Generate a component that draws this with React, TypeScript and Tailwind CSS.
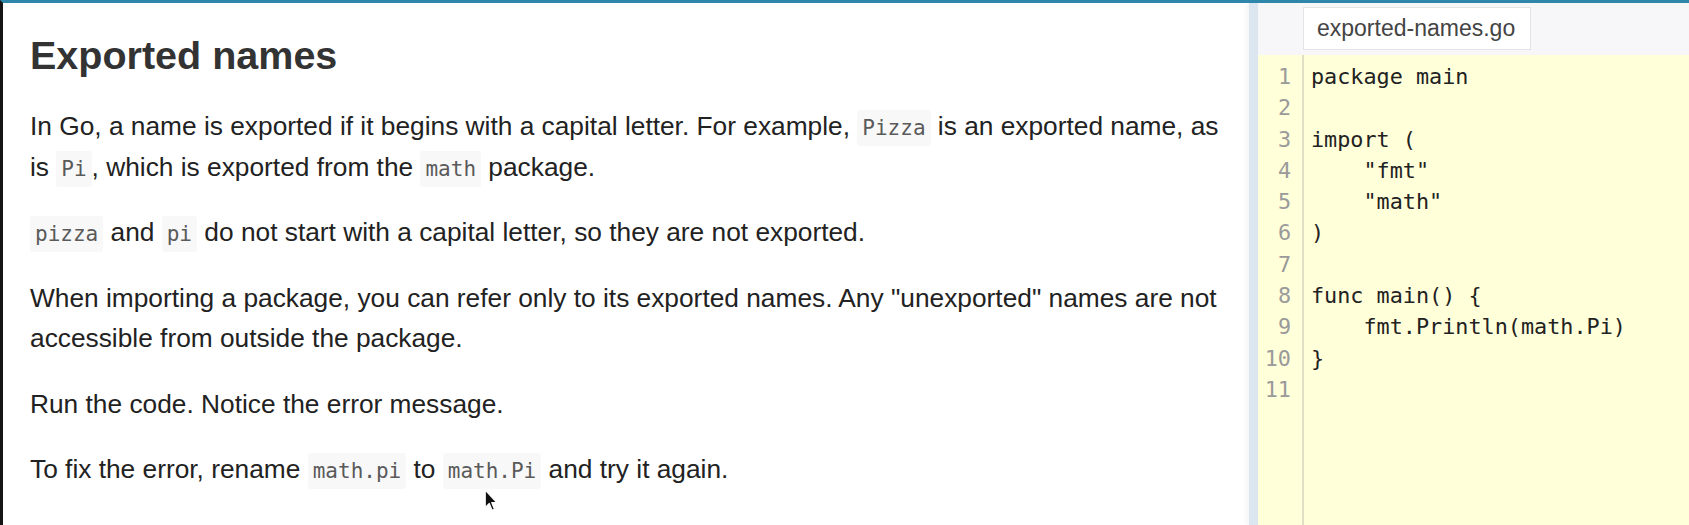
import React from 'react';

const codeLines = [
  'package main',
  '',
  'import (',
  '    "fmt"',
  '    "math"',
  ')',
  '',
  'func main() {',
  '    fmt.Println(math.Pi)',
  '}',
  '',
];

const Code = ({ children }: { children: React.ReactNode }) => (
  <code className="rounded-[3px] bg-[#f8f8f8] px-[5px] py-[6px] font-['DejaVu_Sans_Mono',monospace] text-[21px] leading-none text-[#5a5a5a]">
    {children}
  </code>
);

const App: React.FC = () => {
  return (
    <div className="relative flex h-[525px] w-[1689px] overflow-hidden border-t-[3px] border-l-[3px] border-t-[#2f86ab] border-l-[#151515] bg-white font-['Liberation_Sans',Arial,sans-serif]">
      {/* lesson text */}
      <div className="flex-1 pl-[27px] pr-[26px] pt-[29px] text-[#222]">
        <h1 className="text-[39.5px] font-bold leading-[46px] text-[#333]">Exported names</h1>
        <div className="mt-[28px] flex flex-col gap-[25px] text-[26.3px] leading-[40.5px]">
          <p>
            In Go, a name is exported if it begins with a capital letter. For example, <Code>Pizza</Code> is an exported name, as
            is <Code>Pi</Code>, which is exported from the <Code>math</Code> package.
          </p>
          <p>
            <Code>pizza</Code> and <Code>pi</Code> do not start with a capital letter, so they are not exported.
          </p>
          <p>
            When importing a package, you can refer only to its exported names. Any "unexported" names are not accessible from
            outside the package.
          </p>
          <p>Run the code. Notice the error message.</p>
          <p>
            To fix the error, rename <Code>math.pi</Code> to <Code>math.Pi</Code> and try it again.
          </p>
        </div>
      </div>

      {/* editor */}
      <div className="flex w-[440px] shrink-0">
        <div className="w-[9px] shrink-0 bg-[#dce6f1] shadow-[-3px_0_4px_rgba(0,0,0,0.04)]" />
        <div className="flex flex-1 flex-col">
          <div className="h-[52px] shrink-0 bg-[#f7f7f9] pl-[45px] pt-[4px]">
            <div className="flex h-[43px] w-[228px] items-center whitespace-nowrap border border-[#e4e4e4] bg-white px-[13px] text-[23px] text-[#444]">
              exported-names.go
            </div>
          </div>
          <div className="flex flex-1 bg-[#ffffda] pt-[6px] font-['DejaVu_Sans_Mono',monospace] text-[21.8px] leading-[31.3px]">
            <div className="-mt-[6px] w-[46px] shrink-0 border-r-[2px] border-[#e2dec6] pr-[11px] pt-[6px] text-right text-[#9a9a9a]">
              {codeLines.map((_, i) => (
                <div key={i}>{i + 1}</div>
              ))}
            </div>
            <div className="pl-[7px] text-[#222]">
              {codeLines.map((line, i) => (
                <div key={i} className="whitespace-pre">
                  {line || ' '}
                </div>
              ))}
            </div>
          </div>
        </div>
      </div>

      {/* mouse pointer */}
      <svg className="absolute left-[481px] top-[486px]" width="14" height="23" viewBox="0 0 12 20">
        <path d="M1 1 L1 16 L4.5 12.5 L7 18.5 L9 17.6 L6.6 11.8 L11 11.8 Z" fill="#111" stroke="#fff" strokeWidth="1" strokeLinejoin="round" />
      </svg>
    </div>
  );
};

export default App;
